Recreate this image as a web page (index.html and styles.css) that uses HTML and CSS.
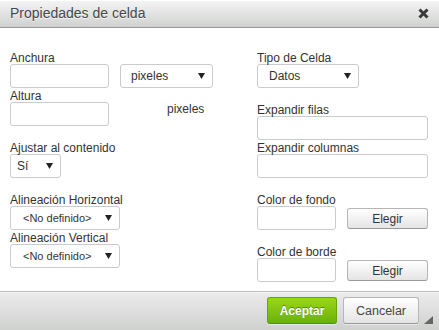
FILE: index.html
```html
<!DOCTYPE html>
<html lang="es">
<head>
    <meta charset="UTF-8">
    <meta name="viewport" content="width=device-width, initial-scale=1.0">
    <title>Propiedades de celda</title>
    <link rel="stylesheet" href="styles.css">
</head>
<body>
    <div class="dialog">
        <div class="dialog-title">
            <span>Propiedades de celda</span>
            <a class="close" title="Cerrar">
                <svg width="11" height="11" viewBox="0 0 11 11"><path d="M1.5 1.5L9.5 9.5M9.5 1.5L1.5 9.5"/></svg>
            </a>
        </div>

        <div class="dialog-body">
            <div class="col">
                <div class="field">
                    <label>Anchura</label>
                    <div class="row">
                        <input type="text" class="input w-size">
                        <div class="select w-unit"><span>pixeles</span><svg class="caret" width="7" height="6" viewBox="0 0 7 6"><path d="M0 0h7L3.5 6z"/></svg></div>
                    </div>
                </div>
                <div class="field tight">
                    <label>Altura</label>
                    <div class="row">
                        <input type="text" class="input w-size">
                        <span class="unit">pixeles</span>
                    </div>
                </div>
                <div class="field">
                    <label>Ajustar al contenido</label>
                    <div class="select w-yes"><span>Sí</span><svg class="caret" width="7" height="6" viewBox="0 0 7 6"><path d="M0 0h7L3.5 6z"/></svg></div>
                </div>
                <div class="field">
                    <label>Alineación Horizontal</label>
                    <div class="select w-align"><span>&lt;No definido&gt;</span><svg class="caret" width="7" height="6" viewBox="0 0 7 6"><path d="M0 0h7L3.5 6z"/></svg></div>
                </div>
                <div class="field tight">
                    <label>Alineación Vertical</label>
                    <div class="select w-align"><span>&lt;No definido&gt;</span><svg class="caret" width="7" height="6" viewBox="0 0 7 6"><path d="M0 0h7L3.5 6z"/></svg></div>
                </div>
            </div>

            <div class="col">
                <div class="field">
                    <label>Tipo de Celda</label>
                    <div class="select w-type"><span>Datos</span><svg class="caret" width="7" height="6" viewBox="0 0 7 6"><path d="M0 0h7L3.5 6z"/></svg></div>
                </div>
                <div class="field">
                    <label>Expandir filas</label>
                    <input type="text" class="input w-full">
                </div>
                <div class="field tight">
                    <label>Expandir columnas</label>
                    <input type="text" class="input w-full">
                </div>
                <div class="field">
                    <label>Color de fondo</label>
                    <div class="row">
                        <input type="text" class="input w-color">
                        <button class="btn btn-pick">Elegir</button>
                    </div>
                </div>
                <div class="field">
                    <label>Color de borde</label>
                    <div class="row">
                        <input type="text" class="input w-color">
                        <button class="btn btn-pick">Elegir</button>
                    </div>
                </div>
            </div>
        </div>

        <div class="dialog-footer">
            <button class="btn btn-ok">Aceptar</button>
            <button class="btn btn-cancel">Cancelar</button>
            <svg class="resize" width="9" height="8" viewBox="0 0 9 8"><path d="M9 0V8H0z"/></svg>
        </div>
    </div>
</body>
</html>
```

FILE: styles.css
```css
body {
    margin: 0;
    font-family: 'Liberation Sans', Arial, sans-serif;
    font-size: 12px;
    color: #333;
}
.dialog {
    width: 439px;
    height: 330px;
    background: #fff;
    display: flex;
    flex-direction: column;
}
.dialog-title {
    height: 27px;
    line-height: 27px;
    padding: 0 10px 0 10px;
    border-bottom: 1px solid #999;
    background: linear-gradient(#f5f5f5, #cfd1cf);
    box-shadow: inset 0 1px 0 #fff;
    display: flex;
    justify-content: space-between;
    align-items: center;
    font-size: 14px;
    color: #474747;
    text-shadow: 0 1px 0 rgba(255, 255, 255, 0.75);
}
.close svg {
    display: block;
    stroke: #3a3a3a;
    stroke-width: 3;
}
.dialog-body {
    flex: 1;
    display: grid;
    grid-template-columns: 236px 171px;
    column-gap: 11px;
    padding: 24px 11px 0 10px;
}
.col {
    display: flex;
    flex-direction: column;
    align-items: flex-start;
}
.field {
    margin-top: 16px;
}
.field:first-child {
    margin-top: 0;
}
.field.tight {
    margin-top: 2px;
}
.field label {
    display: block;
    line-height: 12px;
}
.row {
    display: flex;
    align-items: flex-start;
    gap: 11px;
}
.input {
    box-sizing: border-box;
    display: block;
    height: 24px;
    margin: 0;
    padding: 0 4px;
    border: 1px solid #c9cccf;
    border-radius: 3px;
    background: #fff;
    font: inherit;
}
.select {
    box-sizing: border-box;
    height: 24px;
    border: 1px solid #c9cccf;
    border-radius: 3px;
    background: #fff;
    display: flex;
    align-items: center;
    justify-content: space-between;
    padding: 0 7px 0 10px;
}
.caret {
    display: block;
    fill: #222;
}
.unit {
    line-height: 14px;
    margin-left: 47px;
}
.w-size { width: 99px; }
.w-unit { width: 93px; }
.w-yes { width: 51px; padding-left: 6px; }
.w-align { width: 110px; padding-left: 12px; font-size: 11px; }
.w-type { width: 102px; padding-left: 11px; }
.w-full { width: 171px; }
.w-color { width: 79px; }
.btn {
    box-sizing: border-box;
    margin: 0;
    padding: 0;
    border: 1px solid #b6b6b6;
    border-bottom-color: #999;
    border-radius: 3px;
    background: linear-gradient(#fff, #e4e4e4);
    box-shadow: 0 1px 0 rgba(255, 255, 255, 0.5);
    font-family: inherit;
    font-size: 12px;
    color: #333;
    cursor: pointer;
}
.btn-pick {
    width: 81px;
    height: 21px;
    margin-top: 2px;
}
.dialog-footer {
    position: relative;
    box-sizing: border-box;
    height: 39px;
    padding: 5px 20px 0 0;
    border-top: 1px solid #bcbcbc;
    background: linear-gradient(#ebebeb, #cfd1cf);
    box-shadow: inset 0 1px 0 #f4f4f4;
    display: flex;
    justify-content: flex-end;
    align-items: flex-start;
    gap: 6px;
}
.btn-ok {
    width: 70px;
    height: 27px;
    border-color: #62a60a #62a60a #4d9200;
    background: linear-gradient(#9ad717, #69b10b);
    color: #fff;
    font-weight: bold;
    text-shadow: 0 -1px 0 #55830c;
}
.btn-cancel {
    width: 76px;
    height: 27px;
    font-size: 12.5px;
    color: #474747;
}
.resize {
    position: absolute;
    right: 6px;
    bottom: 6px;
    fill: #666;
}
```
